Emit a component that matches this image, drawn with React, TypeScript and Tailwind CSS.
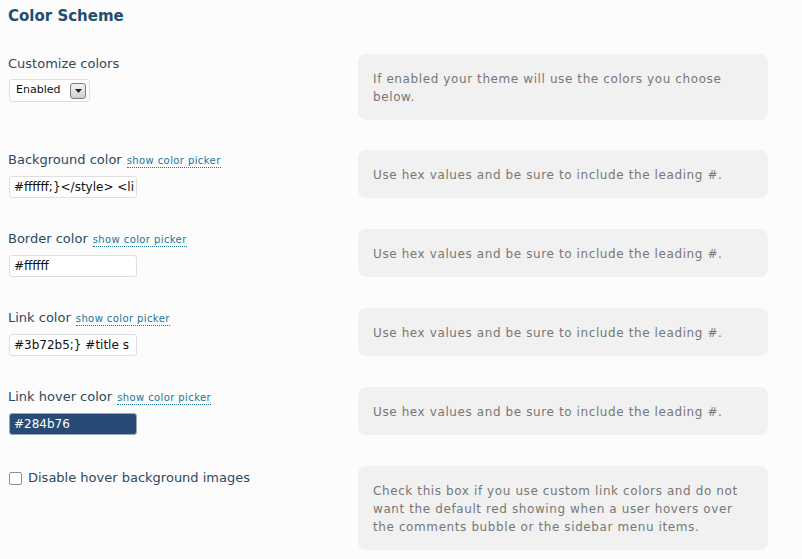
const font = { fontFamily: '"DejaVu Sans", Verdana, sans-serif' };

interface RowProps {
  label: React.ReactNode;
  picker?: boolean;
  control?: React.ReactNode;
  help: React.ReactNode;
  className?: string;
}

const Row = ({ label, picker, control, help, className }: RowProps) => (
  <div className={`flex items-start ${className ?? ""}`}>
    <div className="w-[350px] pt-[2px]">
      <div className="flex items-baseline gap-[5px] text-[13px] leading-[16px] text-[#2c4a5e]">
        {label}
        {picker && (
          <span className="border-b border-dotted border-[#21759b] text-[10px] leading-[12px] tracking-[0.4px] text-[#21759b]">
            show color picker
          </span>
        )}
      </div>
      {control}
    </div>
    <div className="w-[410px] rounded-[8px] bg-[#f1f1f1] px-[15px] pt-[16px] pb-[14px] text-[12px] leading-[18px] tracking-[0.6px] text-[#777]">
      {help}
    </div>
  </div>
);

const TextBox = ({ value, dark }: { value: string; dark?: boolean }) => (
  <div
    className={`mt-[8px] ml-[1px] flex h-[22px] w-[128px] items-center overflow-hidden whitespace-nowrap rounded-[3px] border px-[4px] text-[12px] ${
      dark ? "border-[#9aa6b4] bg-[#284b76] text-white" : "border-[#dfdfdf] bg-white text-[#111]"
    }`}
  >
    {value}
  </div>
);

const HEX_HELP = "Use hex values and be sure to include the leading #.";

export default function App() {
  return (
    <div className="min-h-[559px] w-[802px] bg-[#fcfcfc] pl-[8px] pt-[6px]" style={font}>
      <h2 className="text-[15px] font-bold leading-[20px] text-[#1f4e6e]">Color Scheme</h2>

      <Row
        className="mt-[28px]"
        label={<span>Customize colors</span>}
        control={
          <div className="mt-[7px] ml-[1px] flex h-[23px] w-[81px] items-center justify-between rounded-[3px] border border-[#dfdfdf] bg-white pl-[6px] pr-[3px] text-[11px] text-[#111]">
            <span>Enabled</span>
            <span className="flex h-[16px] w-[16px] items-center justify-center rounded-[3px] border border-[#7a7a7a] bg-gradient-to-b from-[#f4f4f4] to-[#cfcfcf]">
              <svg width="7" height="4" viewBox="0 0 7 4">
                <path d="M0 0h7L3.5 4z" fill="#222" />
              </svg>
            </span>
          </div>
        }
        help={
          <>
            If enabled your theme will use the colors you choose
            <br />
            below.
          </>
        }
      />

      <Row className="mt-[30px]" label={<span>Background color</span>} picker control={<TextBox value="#ffffff;}</style> <li" />} help={HEX_HELP} />
      <Row className="mt-[31px]" label={<span>Border color</span>} picker control={<TextBox value="#ffffff" />} help={HEX_HELP} />
      <Row className="mt-[31px]" label={<span>Link color</span>} picker control={<TextBox value="#3b72b5;} #title s" />} help={HEX_HELP} />
      <Row className="mt-[31px]" label={<span>Link hover color</span>} picker control={<TextBox value="#284b76" dark />} help={HEX_HELP} />

      <Row
        className="mt-[31px]"
        label={
          <label className="mt-[2px] flex items-center gap-[6px]">
            <span className="ml-[1px] h-[13px] w-[13px] rounded-[2px] border border-[#8f8f8f] bg-white" />
            Disable hover background images
          </label>
        }
        help={
          <>
            Check this box if you use custom link colors and do not
            <br />
            want the default red showing when a user hovers over
            <br />
            the comments bubble or the sidebar menu items.
          </>
        }
      />
    </div>
  );
}
